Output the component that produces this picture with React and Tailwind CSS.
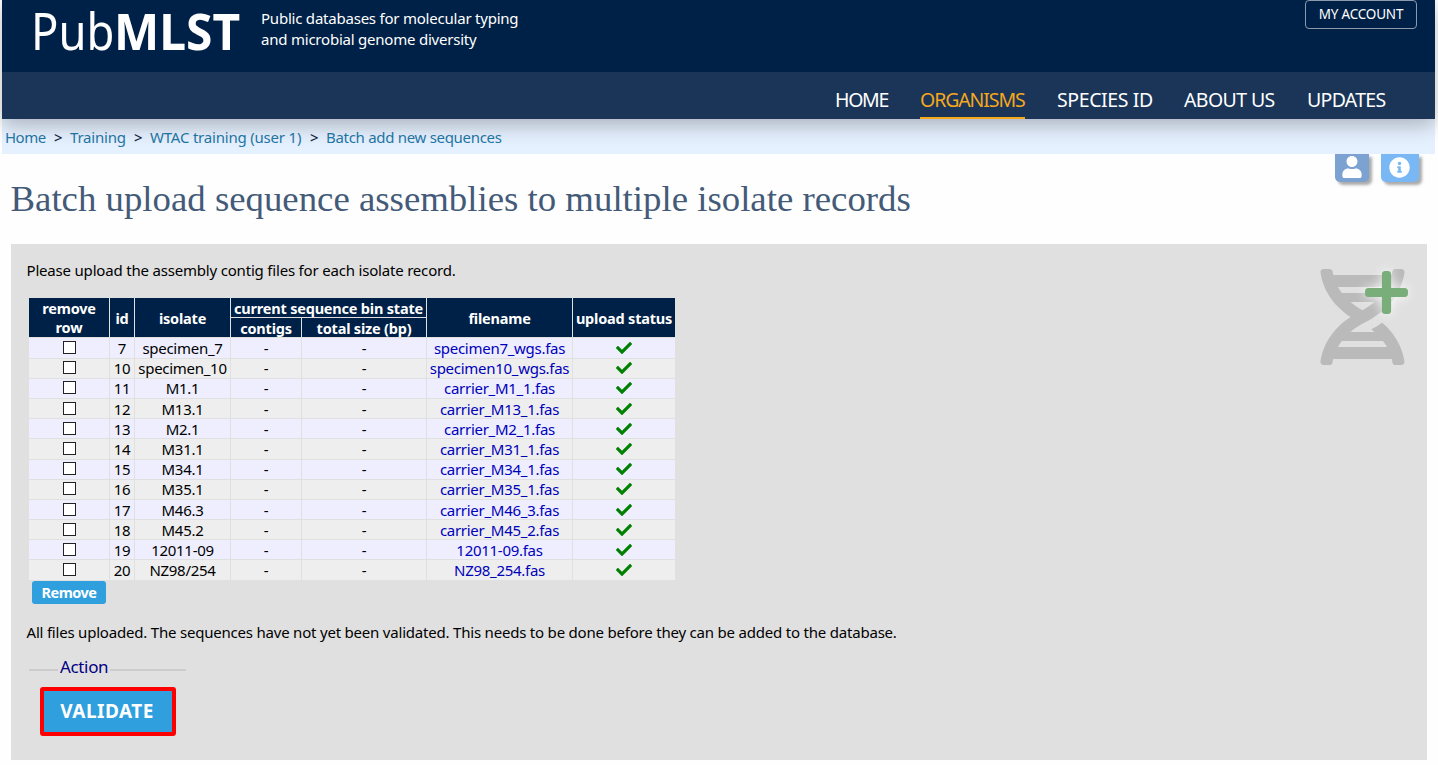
import React from "react";
import { FaCheck, FaDna, FaInfoCircle, FaPlus, FaUser } from "react-icons/fa";

const NAV = [
  { label: "HOME", cls: "w-[53px] tracking-[-1.3px] text-white border-transparent" },
  { label: "ORGANISMS", cls: "w-[105px] tracking-[-1.1px] border-[#f5a81c] text-[#f5a81c]" },
  { label: "SPECIES ID", cls: "w-[95px] tracking-[-0.4px] text-white border-transparent" },
  { label: "ABOUT US", cls: "w-[91px] tracking-[-0.6px] text-white border-transparent" },
  { label: "UPDATES", cls: "w-[79px] tracking-[-0.7px] text-white border-transparent" },
];

const CRUMBS = [
  { label: "Home", cls: "w-[41px] tracking-[-0.5px]" },
  { label: "Training", cls: "w-[56px] tracking-[-0.2px]" },
  { label: "WTAC training (user 1)", cls: "w-[152px] tracking-[-0.2px]" },
  { label: "Batch add new sequences", cls: "w-[177px] tracking-[-0.3px]" },
];

const ROWS = [
  ["7", "specimen_7", "specimen7_wgs.fas"],
  ["10", "specimen_10", "specimen10_wgs.fas"],
  ["11", "M1.1", "carrier_M1_1.fas"],
  ["12", "M13.1", "carrier_M13_1.fas"],
  ["13", "M2.1", "carrier_M2_1.fas"],
  ["14", "M31.1", "carrier_M31_1.fas"],
  ["15", "M34.1", "carrier_M34_1.fas"],
  ["16", "M35.1", "carrier_M35_1.fas"],
  ["17", "M46.3", "carrier_M46_3.fas"],
  ["18", "M45.2", "carrier_M45_2.fas"],
  ["19", "12011-09", "12011-09.fas"],
  ["20", "NZ98/254", "NZ98_254.fas"],
];

const COLS = "grid grid-cols-[80px_24px_95px_70px_124px_145px_102px] gap-x-px";

function Header() {
  return (
    <header className="relative z-10 mr-[3px] ml-[2px] shadow-[0_6px_20px_rgba(0,0,0,0.27)]">
      <div className="flex h-[72px] items-start bg-[#002147] text-white">
        <div className="ml-[29px] flex w-[230px] text-[51px] leading-[61px] whitespace-nowrap">
          <span className="w-[82.5px] origin-left scale-x-[0.89]">Pub</span>
          <span className="origin-left scale-x-[0.94] font-bold">MLST</span>
        </div>
        <p className="pt-[8px] text-[15px] leading-[21px] tracking-[-0.22px] whitespace-nowrap">
          Public databases for molecular typing
          <br />
          and microbial genome diversity
        </p>
        <button className="mr-[18px] ml-auto h-[29px] w-[112px] rounded-[4px] border border-[#8c9aab] text-[13.5px] leading-[27px] tracking-[-0.2px] whitespace-nowrap">
          MY ACCOUNT
        </button>
      </div>
      <nav className="flex h-[47px] justify-end gap-8 bg-[#1a3558] pr-[49px]">
        {NAV.map((n) => (
          <a
            key={n.label}
            className={`h-[47px] border-b-2 pt-[14px] text-[19.5px] leading-[28px] whitespace-nowrap ${n.cls}`}
          >
            {n.label}
          </a>
        ))}
      </nav>
    </header>
  );
}

function Th({ children, className = "" }) {
  return (
    <div className={`flex items-center justify-center bg-[#002147] text-center font-bold whitespace-nowrap text-white ${className}`}>
      {children}
    </div>
  );
}

function IsolateTable() {
  return (
    <div className="ml-[18px] w-[646px] text-[15px] leading-[19px] tracking-[-0.28px]">
      <div className={`${COLS} grid-rows-[19px_19px] gap-y-px text-[14.5px] tracking-[-0.2px]`}>
        <Th className="row-span-2 pt-px">
          remove
          <br />
          row
        </Th>
        <Th className="row-span-2 pt-px">id</Th>
        <Th className="row-span-2 pt-px">isolate</Th>
        <Th className="col-span-2 pt-px">current sequence bin state</Th>
        <Th className="row-span-2 pt-px">filename</Th>
        <Th className="row-span-2 pt-px">upload status</Th>
        <Th className="col-start-4 row-start-2 pt-px">contigs</Th>
        <Th className="col-start-5 row-start-2 pt-px">total size (bp)</Th>
      </div>
      <div className="flex flex-col gap-px pt-[1.4px]">
        {ROWS.map(([id, isolate, file], i) => {
          const cell = `flex h-[19.2px] items-center justify-center whitespace-nowrap pt-[1.2px] ${i % 2 ? "bg-[#eeeeee]" : "bg-[#eeeeff]"}`;
          return (
            <div key={id} className={COLS}>
              <div className={cell}>
                <input type="checkbox" className="mb-[2px] h-[13px] w-[13px] appearance-none border border-[#222] bg-white" />
              </div>
              <div className={cell}>{id}</div>
              <div className={cell}>{isolate}</div>
              <div className={cell}>-</div>
              <div className={cell}>-</div>
              <div className={`${cell} text-[#0000bb]`}>{file}</div>
              <div className={cell}>
                <FaCheck className="-mt-[1px] text-[16px] text-[#008000]" />
              </div>
            </div>
          );
        })}
      </div>
    </div>
  );
}

export default function App() {
  return (
    <div className="flex h-[765px] w-[1438px] flex-col overflow-hidden bg-[#fefefe] font-['Noto_Sans',sans-serif] text-black">
      <Header />
      <div className="mr-[3px] ml-[2px] flex h-[35px] bg-[#e6f1ff] pl-[3px] text-[15px] leading-[37px] text-[#1f78a8]">
        {CRUMBS.map((c, i) => (
          <React.Fragment key={c.label}>
            {i > 0 && <span className="w-[24px] pl-[8px] font-medium text-[#14294a]">&gt;</span>}
            <a className={`whitespace-nowrap ${c.cls}`}>{c.label}</a>
          </React.Fragment>
        ))}
      </div>
      <div className="flex h-[90px] items-start justify-between pr-[19px] pl-[10.5px]">
        <h1 className="pt-[23px] font-['Liberation_Serif',serif] text-[36.8px] leading-[44px] whitespace-nowrap text-[#435a78]">
          Batch upload sequence assemblies to multiple isolate records
        </h1>
        <div className="flex gap-[12px] text-white">
          <div className="flex h-[28px] w-[34px] items-center justify-center rounded-b-[5px] bg-[#7ba2d0] pr-px pb-[2px] shadow-[3px_3px_3px_#aaa]">
            <FaUser className="text-[22px]" />
          </div>
          <div className="flex h-[28px] w-[38px] items-center justify-center rounded-b-[5px] bg-[#7ab8f5] pr-px pb-[1px] shadow-[3px_3px_3px_#aaa]">
            <FaInfoCircle className="text-[21px]" />
          </div>
        </div>
      </div>
      <main className="relative mr-[11px] ml-[11px] h-[516px] bg-[#e0e0e0]">
        <p className="pt-[16px] pb-[17px] pl-[15.5px] text-[15px] leading-[21px] tracking-[-0.19px]">
          Please upload the assembly contig files for each isolate record.
        </p>
        <IsolateTable />
        <button className="mt-[1.6px] ml-[21px] block h-[23px] w-[74px] rounded-[3px] bg-[#2f9fdd] text-[14.5px] leading-[23px] font-bold tracking-[-0.5px] text-white">
          Remove
        </button>
        <p className="mt-[17px] pl-[15.5px] text-[15px] leading-[22px] tracking-[-0.205px]">
          All files uploaded. The sequences have not yet been validated. This needs to be done before they can be added to the database.
        </p>
        <div className="mt-[12px] ml-[18px] flex h-[24px] w-[157px] items-center text-[17px] text-[#000080]">
          <span className="mt-[5px] h-[2px] w-[29px] bg-[#cccccc]" />
          <span className="w-[52px] pl-[2px] leading-[24px] tracking-[-0.35px] whitespace-nowrap">Action</span>
          <span className="mt-[5px] h-[2px] flex-1 bg-[#cccccc]" />
        </div>
        <button className="mt-[8px] ml-[29px] block h-[49px] w-[136px] rounded-[3px] border-4 border-[#ff0000] bg-[#2f9fdd] pr-[2px] text-[19px] leading-[41px] font-bold tracking-[0.5px] text-white">
          VALIDATE
        </button>
        <div className="absolute top-[25px] right-[19px] h-[96px] w-[88px]">
          <FaDna className="-ml-[0.5px] h-[96px] w-[85px] text-[#bababa]" />
          <FaPlus className="absolute -top-[1.5px] right-0 h-[49px] w-[43px] text-[#79ad79] drop-shadow-[0_0_6px_#fff]" />
        </div>
      </main>
    </div>
  );
}
